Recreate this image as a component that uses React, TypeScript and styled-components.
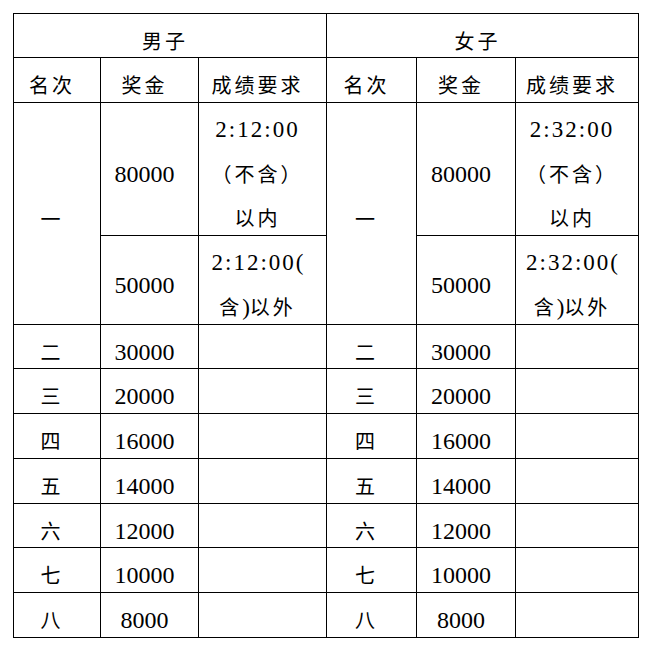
import React from "react";
import styled, { createGlobalStyle } from "styled-components";

const GlobalStyle = createGlobalStyle`
  html, body {
    margin: 0;
    padding: 0;
    background: #ffffff;
  }
`;

const Page = styled.div`
  padding: 13px 0 0 13px;
`;

// black background + 1px gaps draws the rules of the table
const Table = styled.div`
  display: grid;
  width: 626px;
  box-sizing: border-box;
  padding: 1px;
  gap: 1px;
  background: #000000;
  grid-template-columns: 86px 97px 127px 89px 98px 122px;
  grid-template-rows: 43px 44px 132px 88px 43px 44px 44px 44px 43px 44px 44px;
  font-family: "Liberation Serif", "Noto Sans CJK SC", serif;
  color: #000000;
`;

const Cell = styled.div<{ $span?: number; $rows?: number }>`
  background: #ffffff;
  display: flex;
  flex-direction: column;
  align-items: center;
  justify-content: center;
  box-sizing: border-box;
  padding: 10px 10px 0 0;
  line-height: 44px;
  text-align: center;
  white-space: nowrap;
  grid-column: ${(p) => (p.$span ? `span ${p.$span}` : "auto")};
  grid-row: ${(p) => (p.$rows ? `span ${p.$rows}` : "auto")};
`;

const Han = styled.span`
  font-family: "Noto Sans CJK SC", sans-serif;
  font-size: 20px;
  letter-spacing: 3px;
`;

const Amount = styled.span`
  font-size: 24px;
`;

const Time = styled.span`
  font-size: 23px;
  letter-spacing: 2px;
`;

const Paren = styled.span`
  font-size: 23px;
`;

const Line = styled.div`
  display: block;
  height: 44px;
`;

const ranks = [
  { rank: "二", prize: "30000" },
  { rank: "三", prize: "20000" },
  { rank: "四", prize: "16000" },
  { rank: "五", prize: "14000" },
  { rank: "六", prize: "12000" },
  { rank: "七", prize: "10000" },
  { rank: "八", prize: "8000" },
];

const Section = ({ time }: { time: string }) => (
  <>
    <Cell $rows={2}>
      <Han>一</Han>
    </Cell>
    <Cell>
      <Amount>80000</Amount>
    </Cell>
    <Cell>
      <Line>
        <Time>{time}</Time>
      </Line>
      <Line>
        <Han>（不含）</Han>
      </Line>
      <Line>
        <Han>以内</Han>
      </Line>
    </Cell>
  </>
);

const SecondTier = ({ time }: { time: string }) => (
  <>
    <Cell>
      <Amount>50000</Amount>
    </Cell>
    <Cell>
      <Line>
        <Time>{time}</Time>
        <Paren>(</Paren>
      </Line>
      <Line>
        <Han>含</Han>
        <Paren>)</Paren>
        <Han>以外</Han>
      </Line>
    </Cell>
  </>
);

export default function App() {
  return (
    <Page>
      <GlobalStyle />
      <Table>
        <Cell $span={3}>
          <Han>男子</Han>
        </Cell>
        <Cell $span={3}>
          <Han>女子</Han>
        </Cell>

        {[0, 1].map((i) => (
          <React.Fragment key={i}>
            <Cell>
              <Han>名次</Han>
            </Cell>
            <Cell>
              <Han>奖金</Han>
            </Cell>
            <Cell>
              <Han>成绩要求</Han>
            </Cell>
          </React.Fragment>
        ))}

        <Section time="2:12:00" />
        <Section time="2:32:00" />
        <SecondTier time="2:12:00" />
        <SecondTier time="2:32:00" />

        {ranks.map((r) => (
          <React.Fragment key={r.rank}>
            {[0, 1].map((side) => (
              <React.Fragment key={side}>
                <Cell>
                  <Han>{r.rank}</Han>
                </Cell>
                <Cell>
                  <Amount>{r.prize}</Amount>
                </Cell>
                <Cell />
              </React.Fragment>
            ))}
          </React.Fragment>
        ))}
      </Table>
    </Page>
  );
}
